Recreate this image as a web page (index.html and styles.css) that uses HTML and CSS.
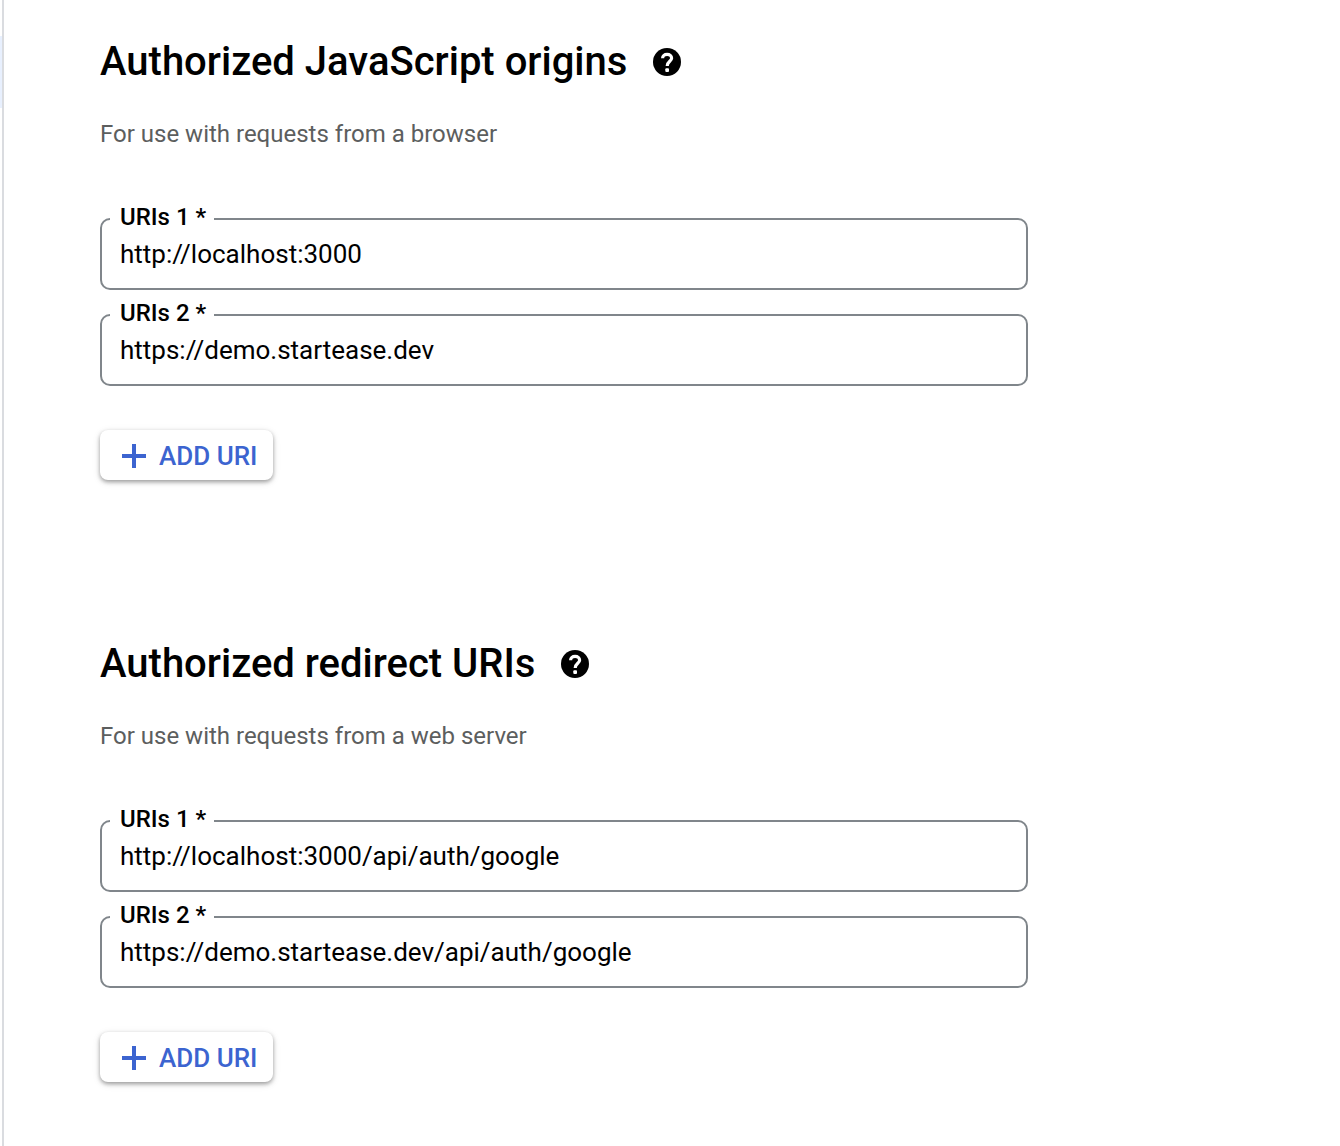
FILE: index.html
```html
<!DOCTYPE html>
<html lang="en">
<head>
    <meta charset="UTF-8">
    <meta name="viewport" content="width=device-width, initial-scale=1.0">
    <title>OAuth client URIs</title>
    <link rel="stylesheet" href="styles.css">
</head>
<body>
    <div class="page">
        <nav class="side-nav" aria-label="Sections">
            <div class="side-nav-active"></div>
        </nav>
        <main class="content">
            <section class="uri-section">
                <div class="section-header">
                    <h2>Authorized JavaScript origins</h2>
                    <button type="button" class="help-button" aria-label="Help">
                        <svg viewBox="0 0 28 28">
                            <circle cx="14" cy="14" r="14"/>
                            <path class="help-mark" d="M9.600 10.200C9.600 7.800 11.500 6.300 14.100 6.300S18.600 7.800 18.600 10.200C18.600 13.300 14.200 13.300 14.200 18"/>
                            <rect class="help-dot" x="12.300" y="20.200" width="3.700" height="3.700" rx="1"/>
                        </svg>
                    </button>
                </div>
                <p class="section-hint">For use with requests from a browser</p>
                <div class="field-list">
                    <div class="field">
                        <label for="origin-1">URIs 1 *</label>
                        <input type="text" id="origin-1" value="http://localhost:3000">
                    </div>
                    <div class="field">
                        <label for="origin-2">URIs 2 *</label>
                        <input type="text" id="origin-2" value="https://demo.startease.dev">
                    </div>
                </div>
                <button type="button" class="add-button">
                    <svg viewBox="0 0 24 24"><path d="M10 0h4v10h10v4H14v10h-4V14H0v-4h10z"/></svg>
                    <span>ADD URI</span>
                </button>
            </section>

            <section class="uri-section">
                <div class="section-header">
                    <h2>Authorized redirect URIs</h2>
                    <button type="button" class="help-button" aria-label="Help">
                        <svg viewBox="0 0 28 28">
                            <circle cx="14" cy="14" r="14"/>
                            <path class="help-mark" d="M9.600 10.200C9.600 7.800 11.500 6.300 14.100 6.300S18.600 7.800 18.600 10.200C18.600 13.300 14.200 13.300 14.200 18"/>
                            <rect class="help-dot" x="12.300" y="20.200" width="3.700" height="3.700" rx="1"/>
                        </svg>
                    </button>
                </div>
                <p class="section-hint">For use with requests from a web server</p>
                <div class="field-list">
                    <div class="field">
                        <label for="redirect-1">URIs 1 *</label>
                        <input type="text" id="redirect-1" value="http://localhost:3000/api/auth/google">
                    </div>
                    <div class="field">
                        <label for="redirect-2">URIs 2 *</label>
                        <input type="text" id="redirect-2" value="https://demo.startease.dev/api/auth/google">
                    </div>
                </div>
                <button type="button" class="add-button">
                    <svg viewBox="0 0 24 24"><path d="M10 0h4v10h10v4H14v10h-4V14H0v-4h10z"/></svg>
                    <span>ADD URI</span>
                </button>
            </section>
        </main>
    </div>
</body>
</html>
```
FILE: styles.css
```css
* {
    box-sizing: border-box;
    margin: 0;
    padding: 0;
}

body {
    font-family: Roboto, sans-serif;
    background: #fff;
    color: #000;
}

.page {
    display: flex;
    min-height: 100vh;
}

/* Side navigation edge */
.side-nav {
    flex: none;
    width: 4px;
    padding-top: 36px;
    border-right: 2px solid #dadce0;
}

.side-nav-active {
    height: 72px;
    background: #e8f0fe;
}

/* Content */
.content {
    flex: 1;
    display: flex;
    flex-direction: column;
    gap: 160px;
    max-width: 1120px;
    padding: 38px 96px 64px;
}

.section-header {
    display: flex;
    align-items: center;
    gap: 26px;
}

.section-header h2 {
    font-size: 40px;
    font-weight: 500;
    line-height: 48px;
}

.help-button {
    width: 28px;
    height: 28px;
    border: none;
    background: none;
    cursor: pointer;
}

.help-button svg {
    display: block;
}

.help-mark {
    fill: none;
    stroke: #fff;
    stroke-width: 3.2;
}

.help-dot {
    fill: #fff;
}

.section-hint {
    margin-top: 32px;
    font-size: 24px;
    line-height: 32px;
    color: #5c5e5e;
}

/* Fields */
.field-list {
    display: flex;
    flex-direction: column;
    gap: 24px;
    margin: 68px 0 44px;
}

.field {
    position: relative;
}

.field label {
    position: absolute;
    top: -15px;
    left: 10px;
    padding: 0 8px 0 10px;
    font-size: 24px;
    font-weight: 500;
    line-height: 28px;
    background: #fff;
}

.field input {
    display: block;
    width: 100%;
    height: 72px;
    padding: 0 18px;
    border: 2px solid #80868b;
    border-radius: 10px;
    font-family: inherit;
    font-size: 26px;
    color: #000;
    background: transparent;
}

/* Add button */
.add-button {
    display: inline-flex;
    align-items: center;
    gap: 13px;
    height: 50px;
    padding: 2px 16px 0 22px;
    border: none;
    border-radius: 8px;
    background: #fff;
    box-shadow: 0 2px 4px rgba(0, 0, 0, 0.36), 0 2px 10px rgba(0, 0, 0, 0.08);
    font-family: inherit;
    font-size: 26px;
    font-weight: 500;
    line-height: 32px;
    color: #3c64d0;
    cursor: pointer;
}

.add-button svg {
    width: 24px;
    height: 24px;
    fill: currentColor;
}
```
